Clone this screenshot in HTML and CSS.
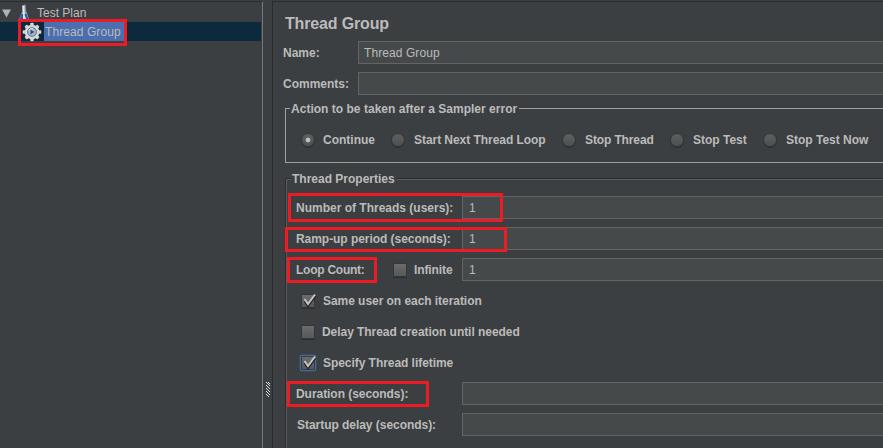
FILE: index.html
```html
<!DOCTYPE html>
<html lang="en">
<head>
<meta charset="utf-8">
<title>Thread Group</title>
<link rel="stylesheet" href="styles.css">
</head>
<body>
<div class="app">
  <aside class="tree">
    <div class="node root">
      <svg class="arrow" width="9" height="9" viewBox="0 0 9 9"><path d="M0 .5h9L4.500 8.500z" fill="#afb1b3"/></svg>
      <svg class="flask" width="12" height="18" viewBox="0 0 12 18">
        <path d="M4 1.500 7.500.5 8 6l3.500 10.500h-11L4 8z" fill="#8c98a5"/>
        <path d="M4.500 2 6.500 1.500V8L9 15H3L5 8z" fill="#e4e9ef"/>
        <path d="M3.500 10h5l2.500 6.500H1z" fill="#2d5c9c"/>
        <path d="M5 10h1.500l1.500 5H5z" fill="#c9def3"/>
        <path d="M.5 16.500h11" stroke="#dfe5ec"/>
      </svg>
      <span class="t-plan">Test Plan</span>
    </div>
    <div class="node selected">
      <svg class="gear" width="20" height="20" viewBox="-10 -10 20 20">
        <g fill="#d6d6d4"><circle r="7.300"/>
          <g><rect x="-1.700" y="-9.300" width="3.400" height="18.600" rx=".8"/><rect x="-9.300" y="-1.700" width="18.600" height="3.400" rx=".8"/></g>
          <g transform="rotate(45)"><rect x="-1.700" y="-9" width="3.400" height="18" rx=".8"/><rect x="-9" y="-1.700" width="18" height="3.400" rx=".8"/></g>
        </g>
        <circle r="4.300" fill="#a9bdd4" stroke="#5c6b7d" stroke-width="1"/>
        <path d="M-1.500-2.500 2.500 0-1.500 2.500z" fill="#294f80"/>
        <path d="M-3.300-1.500A4 4 0 0 1 1-3.400" fill="none" stroke="#e2ebf4"/>
      </svg>
      <span class="t-group">Thread Group</span>
    </div>
  </aside>
  <div class="divider"><svg width="4" height="15" viewBox="0 0 4 15" shape-rendering="crispEdges"><path d="M0 0h1v1H0zM2 0h1v1H2zM1 1h1v1H1zM3 1h1v1H3zM0 3h1v1H0zM2 2h1v1H2zM1 4h1v1H1zM3 3h1v1H3zM0 6h1v1H0zM2 5h1v1H2zM1 7h1v1H1zM3 6h1v1H3zM0 9h1v1H0zM2 8h1v1H2zM1 10h1v1H1zM3 9h1v1H3zM0 12h1v1H0zM2 11h1v1H2zM1 13h1v1H1zM3 12h1v1H3zM2 14h1v1H2z" fill="#ddd"/></svg></div>
  <main class="panel">
    <h1><span class="t-title">Thread Group</span></h1>
    <div class="row head"><label class="t-name">Name:</label><div class="field"><span class="t-value">Thread Group</span></div></div>
    <div class="row head"><label class="t-comments">Comments:</label><div class="field"></div></div>
    <fieldset class="action">
      <legend><span class="t-action">Action to be taken after a Sampler error</span></legend>
      <div class="options">
        <div class="option o1"><i class="radio on"></i><span class="t-continue">Continue</span></div>
        <div class="option o2"><i class="radio"></i><span class="t-next">Start Next Thread Loop</span></div>
        <div class="option o3"><i class="radio"></i><span class="t-stopthread">Stop Thread</span></div>
        <div class="option o4"><i class="radio"></i><span class="t-stoptest">Stop Test</span></div>
        <div class="option o5"><i class="radio"></i><span class="t-now">Stop Test Now</span></div>
      </div>
    </fieldset>
    <fieldset class="props">
      <legend><span class="t-props">Thread Properties</span></legend>
      <div class="rows">
      <div class="row"><label class="t-threads">Number of Threads (users):</label><div class="field">1</div></div>
      <div class="row"><label class="t-ramp">Ramp-up period (seconds):</label><div class="field">1</div></div>
      <div class="row loop"><label class="t-loop">Loop Count:</label><div class="infinite"><i class="check"></i><span class="t-inf">Infinite</span></div><div class="field">1</div></div>
      <div class="row tick"><i class="check"><svg class="mark" width="16" height="15" viewBox="0 0 16 15"><path d="M3.500 7 7 12 14.500 2" fill="none" stroke="#222" stroke-width="2" transform="translate(0 1)"/><path d="M3.500 6 7 11 14 1.500" fill="none" stroke="#c4c4c4" stroke-width="2"/></svg></i><span class="t-same">Same user on each iteration</span></div>
      <div class="row tick"><i class="check"></i><span class="t-delay">Delay Thread creation until needed</span></div>
      <div class="row tick"><i class="check focus"><svg class="mark" width="16" height="15" viewBox="0 0 16 15"><path d="M3.500 7 7 12 14.500 2" fill="none" stroke="#222" stroke-width="2" transform="translate(0 1)"/><path d="M3.500 6 7 11 14 1.500" fill="none" stroke="#c4c4c4" stroke-width="2"/></svg></i><span class="t-life">Specify Thread lifetime</span></div>
      <div class="row"><label class="t-duration">Duration (seconds):</label><div class="field"></div></div>
      <div class="row"><label class="t-startup">Startup delay (seconds):</label><div class="field"></div></div>
      </div>
    </fieldset>
  </main>
  <div class="mark-box m-node"></div>
  <div class="mark-box m-threads"></div>
  <div class="mark-box m-ramp"></div>
  <div class="mark-box m-loop"></div>
  <div class="mark-box m-duration"></div>
</div>
</body>
</html>
```

FILE: styles.css
```css
* { box-sizing: border-box; }
body { margin: 0; background: #3c3f41; color: #bbb; font: bold 12px/14px "Liberation Sans", Arial, sans-serif; }
.app { position: relative; display: flex; width: 883px; height: 448px; overflow: hidden; white-space: nowrap; }
.tree { width: 263px; margin-top: 1px; padding-top: 2px; border-top: 1px solid #2b2b2b; border-right: 1px solid #747677; font-weight: normal; }
.node { display: flex; align-items: center; height: 19px; }
.node.root { height: 18px; padding-left: 2px; }
.arrow { margin-right: 7px; }
.flask { margin-right: 7px; }
.node.selected { width: 261px; background: #0d293e; padding-left: 22px; }
.gear { margin-right: 2px; }
.t-group { height: 19px; line-height: 20px; padding: 0 3px 0 1px; background: #4b6eaf; letter-spacing: .08px; }
.divider { width: 9px; padding: 382px 0 0 3px; }
.divider svg { display: block; }
.panel { flex: 1; min-width: 0; height: 447px; margin-top: 1px; border: solid #2b2b2b; border-width: 1px 0 0 1px; padding-left: 11px; }
h1 { height: 35px; margin: 0; padding: 13px 0 0 1px; font-size: 16px; line-height: 18px; letter-spacing: -.15px; }
.row { display: flex; align-items: center; height: 31px; }
.row > label { width: 166px; }
.row.head > label { width: 75px; margin-left: -1px; }
.row.head .field { padding-left: 5px; }
.t-value { letter-spacing: .08px; }
.field { flex: 1; height: 23px; padding-left: 6px; border: 1px solid #646464; border-right: 0; background: #45494a; font-weight: normal; line-height: 22px; }
fieldset { margin: 0; min-width: 0; padding: 0; }
legend { height: 14px; padding: 0 1px; line-height: 16px; }
.action { height: 62px; margin: 2px 0 0 1px; border: 1px solid #a0a0a0; border-right: 0; }
.action legend { margin-left: 4px; padding-right: 2px; letter-spacing: .02px; }
.options { display: flex; height: 34px; align-items: center; padding-left: 15px; margin-top: 8px; }
.option { display: flex; align-items: center; }
.o1 { width: 90px; }
.o2 { width: 171px; }
.o3 { width: 108px; }
.o4 { width: 93px; }
.o2 span, .o3 span, .o4 span, .o5 span { margin-left: 1px; }
.t-next { letter-spacing: -.05px; }
.t-stopthread { letter-spacing: -.12px; }
.radio { width: 14px; height: 14px; margin-right: 8px; border: 1px solid #343638; border-radius: 50%; background: linear-gradient(#5c6061, #4c5051); box-shadow: 0 1px #2d2f31; }
.radio.on { background: radial-gradient(circle, #bebebe 0 2px, transparent 2.800px), linear-gradient(#5c6061, #4c5051); }
.props { height: 300px; margin: 8px 0 0 1px; border: 1px solid #2b2b2b; border-width: 1px 0 0 1px; box-shadow: inset 1px 1px #5b5d5e; padding-left: 10px; }
.props legend { margin-left: -5px; padding-right: 2px; background: #3c3f41; }
.rows { margin-top: 7px; }
.loop > label { width: 97px; }
.infinite { display: flex; width: 69px; }
.check { position: relative; flex: none; width: 14px; height: 14px; margin-right: 7px; border: 1px solid #333536; background: linear-gradient(#6b6b6b, #585858); box-shadow: 0 1px #2d2f31; border-radius: 1px; }
.tick { padding-left: 5px; }
.tick .check { margin-right: 8px; }
.t-loop { letter-spacing: -.25px; }
.t-ramp, .t-duration, .t-same, .t-life { letter-spacing: -.05px; }
.t-inf { letter-spacing: -.1px; }
.t-delay { margin-left: -1px; letter-spacing: -.05px; }
.row > .t-startup { padding-left: 1px; letter-spacing: -.04px; }
.check.focus { border-color: #303c4c; box-shadow: 0 0 0 1px #466d9b, 0 0 2px 1px #466894; }
.mark { position: absolute; left: -1px; top: -2px; }
.mark-box { position: absolute; border: 3px solid #ed1c24; }
.m-node { left: 18px; top: 19px; width: 109px; height: 27px; }
.m-threads { left: 288px; top: 193px; width: 215px; height: 29px; }
.m-ramp { left: 285px; top: 227px; width: 222px; height: 25px; }
.m-loop { left: 287px; top: 257px; width: 90px; height: 26px; }
.m-duration { left: 287px; top: 381px; width: 142px; height: 26px; }
```
